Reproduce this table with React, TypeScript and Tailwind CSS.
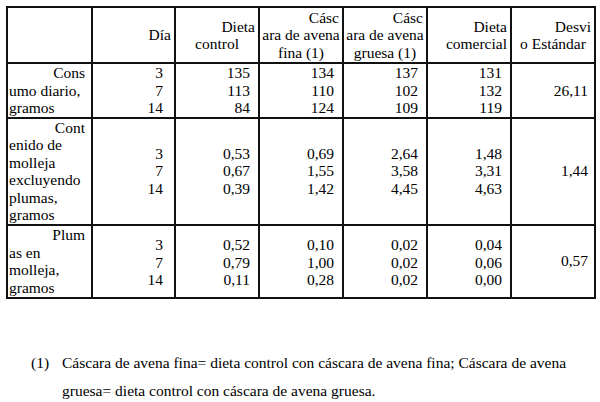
import React from 'react'

type Line = { t: string; a: 'r' | 'c' }

// header lines per column: first line right, rest mostly centered (pdf artifact)
const HEAD: Line[][] = [
  [],
  [{ t: 'Día', a: 'r' }],
  [
    { t: 'Dieta', a: 'r' },
    { t: 'control', a: 'c' },
  ],
  [
    { t: 'Cásc', a: 'r' },
    { t: 'ara de avena', a: 'c' },
    { t: 'fina (1)', a: 'c' },
  ],
  [
    { t: 'Cásc', a: 'r' },
    { t: 'ara de avena', a: 'c' },
    { t: 'gruesa (1)', a: 'c' },
  ],
  [
    { t: 'Dieta', a: 'r' },
    { t: 'comercial', a: 'r' },
  ],
  [
    { t: 'Desvi', a: 'r' },
    { t: 'o Estándar', a: 'c' },
  ],
]

type Row = {
  label: string[]
  cols: string[][]
  sd: string
}

const ROWS: Row[] = [
  {
    label: ['Cons', 'umo diario,', 'gramos'],
    cols: [
      ['3', '7', '14'],
      ['135', '113', '84'],
      ['134', '110', '124'],
      ['137', '102', '109'],
      ['131', '132', '119'],
    ],
    sd: '26,11',
  },
  {
    label: ['Cont', 'enido de', 'molleja', 'excluyendo', 'plumas,', 'gramos'],
    cols: [
      ['3', '7', '14'],
      ['0,53', '0,67', '0,39'],
      ['0,69', '1,55', '1,42'],
      ['2,64', '3,58', '4,45'],
      ['1,48', '3,31', '4,63'],
    ],
    sd: '1,44',
  },
  {
    label: ['Plum', 'as en', 'molleja,', 'gramos'],
    cols: [
      ['3', '7', '14'],
      ['0,52', '0,79', '0,11'],
      ['0,10', '1,00', '0,28'],
      ['0,02', '0,02', '0,02'],
      ['0,04', '0,06', '0,00'],
    ],
    sd: '0,57',
  },
]

const serif = "font-['Liberation_Serif','Times_New_Roman',serif] text-[15.5px] leading-[17.5px] text-black"
const cell = `${serif} border-2 border-[#111] p-0 align-middle`

export default function App() {
  return (
    <div className={`w-[600px] h-[402px] overflow-hidden bg-white ${serif}`}>
      <div className="pt-[6px] pl-[6px]">
        <table className={`${serif} table-fixed border-collapse w-[588px] border-2 border-[#777]`}>
          <colgroup>
            <col className="w-[85px]" />
            <col className="w-[83px]" />
            <col className="w-[84px]" />
            <col className="w-[84px]" />
            <col className="w-[84px]" />
            <col className="w-[84px]" />
            <col className="w-[84px]" />
          </colgroup>
          <thead>
            <tr className="h-[56px]">
              {HEAD.map((lines, i) => (
                <th key={i} className={`${cell} font-normal`}>
                  {lines.map((l, j) => (
                    <div
                      key={j}
                      className={l.a === 'r' ? 'text-right pr-[3px]' : 'text-center whitespace-nowrap'}
                    >
                      {l.t}
                    </div>
                  ))}
                </th>
              ))}
            </tr>
          </thead>
          <tbody>
            {ROWS.map((r, i) => (
              <tr key={i} className={i === 2 ? 'h-[73px]' : ''}>
                <td className={cell}>
                  {r.label.map((t, j) => (
                    <div
                      key={j}
                      className={j === 0 ? 'text-right pr-[6px]' : 'text-left pl-[1px] whitespace-nowrap'}
                    >
                      {t}
                    </div>
                  ))}
                </td>
                {r.cols.map((vals, c) => (
                  <td
                    key={c}
                    className={`${cell} text-right ${c === 0 ? 'pr-[11px]' : 'pr-[8px]'} ${i === 2 ? 'pt-[3px]' : ''}`}
                  >
                    {vals.map((v, k) => (
                      <div key={k}>{v}</div>
                    ))}
                  </td>
                ))}
                <td className={`${cell} text-right pr-[6px]`}>{r.sd}</td>
              </tr>
            ))}
          </tbody>
        </table>
      </div>

      <div className={`${serif} mt-[50px] flex !leading-[28px]`}>
        <span className="w-[62px] pl-[31px] shrink-0">(1)</span>
        <div>
          <div className="whitespace-nowrap">
            Cáscara de avena fina= dieta control con cáscara de avena fina; Cáscara de avena
          </div>
          <div>gruesa= dieta control con cáscara de avena gruesa.</div>
        </div>
      </div>
    </div>
  )
}
